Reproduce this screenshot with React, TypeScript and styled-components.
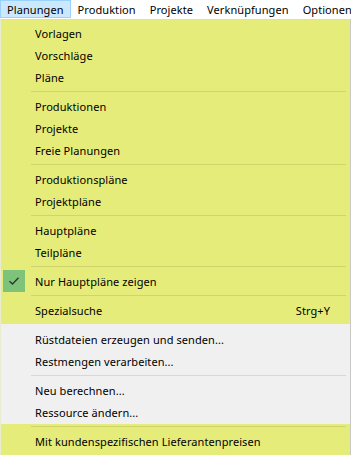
import React from 'react';
import styled, { createGlobalStyle } from 'styled-components';

const GlobalStyle = createGlobalStyle`
    html, body {
        margin: 0;
        padding: 0;
        background: #ffffff;
    }
    body {
        font-family: "Noto Sans", "Open Sans", "Liberation Sans", sans-serif;
        font-size: 11px;
        letter-spacing: 0.08px;
        color: #000000;
        width: 351px;
        height: 455px;
        overflow: hidden;
    }
`

const YELLOW = '#e5ec7a';
const GRAY = '#f0f0f0';

const Wrapper = styled.div`
    width: 351px;
    display: flex;
    flex-direction: column;
`
const MenuBar = styled.div`
    display: flex;
    height: 19px;
    background: #ffffff;
    overflow: hidden;
`
const BarItem = styled.div<{ $active?: boolean }>`
    display: flex;
    align-items: center;
    flex-shrink: 0;
    height: 18px;
    padding: 0 6px;
    box-sizing: border-box;
    border: 1px solid ${({ $active }) => ($active ? '#99d1ff' : 'transparent')};
    background: ${({ $active }) => ($active ? '#cce8ff' : 'transparent')};
    white-space: nowrap;
`
const Dropdown = styled.div`
    display: flex;
    flex-direction: column;
    border-top: 1px solid #d9d9d9;
    border-left: 1px solid #e8ecd0;
    border-right: 1px solid #c8c8c8;
    width: 351px;
    box-sizing: border-box;
`
const Group = styled.div<{ $tone: 'yellow' | 'gray'; $top: number; $bottom: number }>`
    display: flex;
    flex-direction: column;
    background: ${({ $tone }) => ($tone === 'yellow' ? YELLOW : GRAY)};
    padding-top: ${({ $top }) => $top}px;
    padding-bottom: ${({ $bottom }) => $bottom}px;
`
const Item = styled.div`
    display: grid;
    grid-template-columns: 34px 1fr auto;
    align-items: center;
    height: 22px;
    padding-right: 20px;
    white-space: nowrap;
`
const Gutter = styled.div`
    display: flex;
    align-items: center;
    justify-content: center;
    height: 22px;
    width: 22px;
    margin-left: 2px;
`
const CheckBox = styled.div`
    display: flex;
    align-items: center;
    justify-content: center;
    width: 22px;
    height: 22px;
    background: #7dc47a;
`
const Shortcut = styled.span`
    padding-right: 0;
`
const Separator = styled.div<{ $tone: 'yellow' | 'gray'; $height?: number; $offset?: number }>`
    height: ${({ $height }) => $height ?? 7}px;
    padding-left: 30px;
    padding-right: 4px;
    padding-top: ${({ $offset }) => $offset ?? 3}px;
    box-sizing: border-box;
    &::after {
        content: '';
        display: block;
        height: 1px;
        background: ${({ $tone }) => ($tone === 'yellow' ? '#cfd56c' : '#d7d7d7')};
    }
`

type Entry = { label?: string; checked?: boolean; shortcut?: string; sep?: boolean };

const topEntries: Entry[] = [
    { label: 'Vorlagen' },
    { label: 'Vorschläge' },
    { label: 'Pläne' },
    { sep: true },
    { label: 'Produktionen' },
    { label: 'Projekte' },
    { label: 'Freie Planungen' },
    { sep: true },
    { label: 'Produktionspläne' },
    { label: 'Projektpläne' },
    { sep: true },
    { label: 'Hauptpläne' },
    { label: 'Teilpläne' },
    { sep: true },
    { label: 'Nur Hauptpläne zeigen', checked: true },
    { sep: true },
    { label: 'Spezialsuche', shortcut: 'Strg+Y' },
];

const grayEntries: Entry[] = [
    { label: 'Rüstdateien erzeugen und senden...' },
    { label: 'Restmengen verarbeiten...' },
    { sep: true },
    { label: 'Neu berechnen...' },
    { label: 'Ressource ändern...' },
];

const Check = () => (
    <svg width="12" height="10" viewBox="0 0 12 10">
        <path d="M1.5 5.2 L4.5 8 L10.5 1.8" fill="none" stroke="#333" strokeWidth="1.4" />
    </svg>
);

const renderEntries = (entries: Entry[], tone: 'yellow' | 'gray') =>
    entries.map((e, i) =>
        e.sep ? (
            <Separator key={i} $tone={tone} />
        ) : (
            <Item key={i}>
                <Gutter>{e.checked && <CheckBox><Check /></CheckBox>}</Gutter>
                <span>{e.label}</span>
                <Shortcut>{e.shortcut}</Shortcut>
            </Item>
        )
    );

export default function App() {
    const bar = ['Planungen', 'Produktion', 'Projekte', 'Verknüpfungen', 'Optionen'];
    return (
        <Wrapper>
            <GlobalStyle />
            <MenuBar>
                {bar.map((b, i) => (
                    <BarItem key={b} $active={i === 0}>{b}</BarItem>
                ))}
            </MenuBar>
            <Dropdown>
                <Group $tone="yellow" $top={2} $bottom={3}>
                    {renderEntries(topEntries, 'yellow')}
                </Group>
                <Group $tone="gray" $top={4} $bottom={1}>
                    {renderEntries(grayEntries, 'gray')}
                </Group>
                <Group $tone="yellow" $top={0} $bottom={4}>
                    <Separator $tone="yellow" $height={6} $offset={2} />
                    <Item>
                        <Gutter />
                        <span>Mit kundenspezifischen Lieferantenpreisen</span>
                        <Shortcut />
                    </Item>
                </Group>
            </Dropdown>
        </Wrapper>
    );
}
